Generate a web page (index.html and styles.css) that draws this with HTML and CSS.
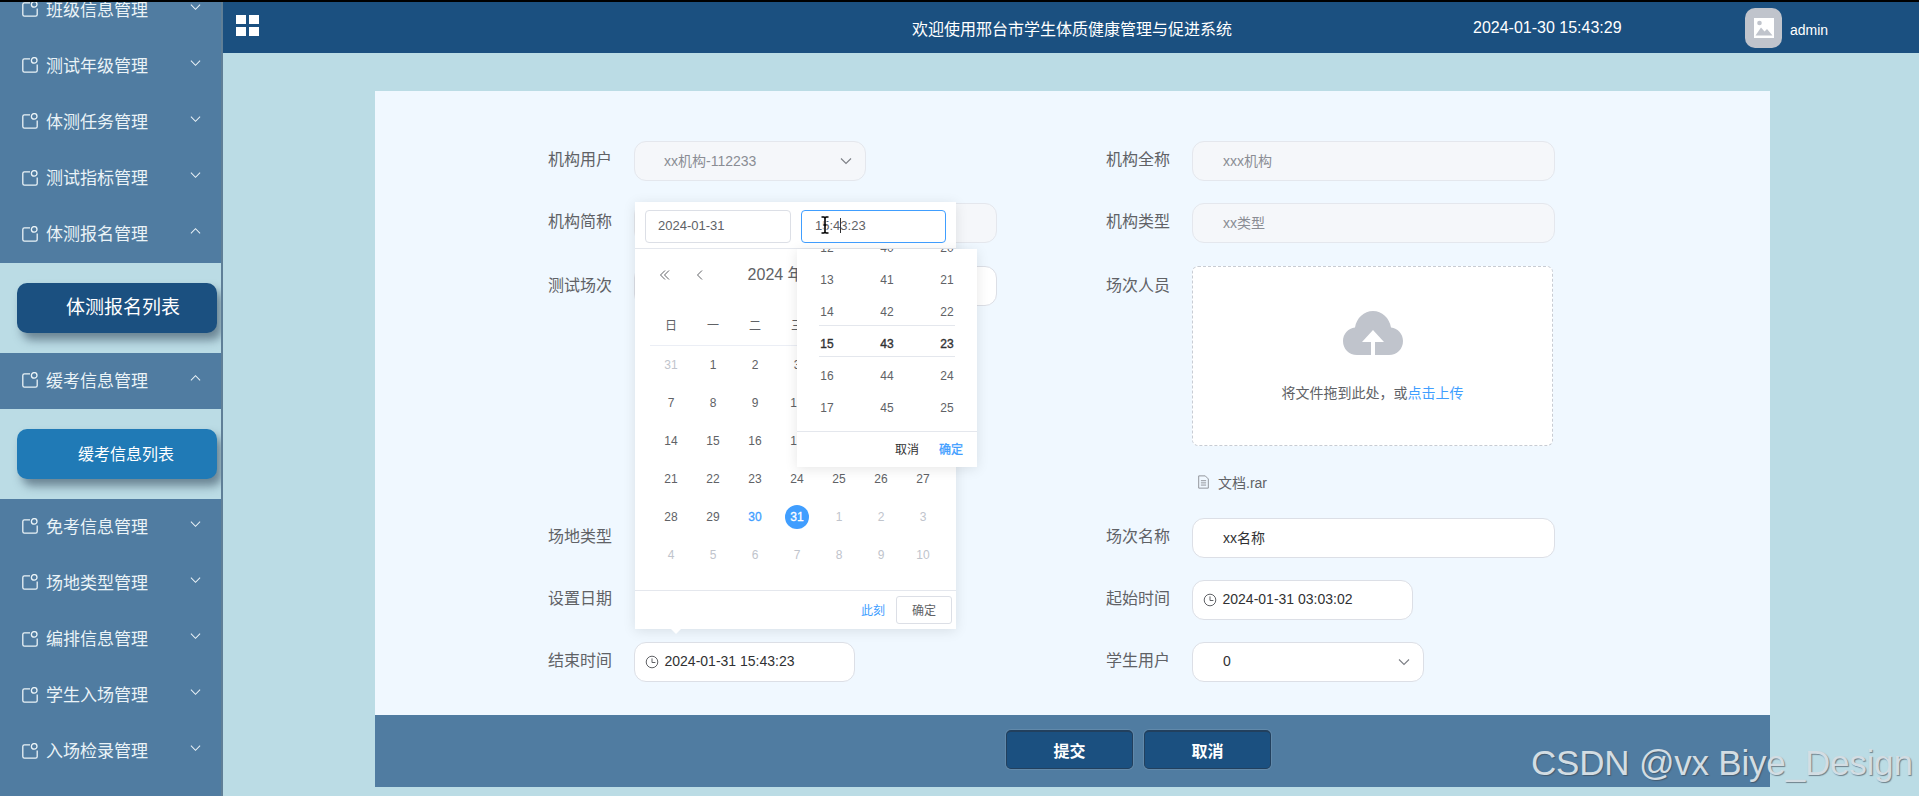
FILE: index.html
```html
<!DOCTYPE html>
<html lang="zh-CN">
<head>
<meta charset="utf-8">
<title>学生体质健康管理与促进系统</title>
<link rel="stylesheet" href="styles.css">
</head>
<body>
<svg class="defs" width="0" height="0" aria-hidden="true">
  <symbol id="tag" viewBox="0 0 16 16"><path d="M8 1.800H2.400C1.400 1.800.8 2.400.8 3.400v10.200c0 1 .6 1.600 1.600 1.600h11.200c1 0 1.600-.6 1.600-1.600V7.500" fill="none" stroke="currentColor" stroke-width="1.300"/><circle cx="12.200" cy="3.400" r="2.800" fill="none" stroke="currentColor" stroke-width="1.300"/></symbol>
  <symbol id="down" viewBox="0 0 12 8"><path d="M1 1.500l5 5 5-5" fill="none" stroke="currentColor" stroke-width="1.100"/></symbol>
  <symbol id="up" viewBox="0 0 12 8"><path d="M1 6.500l5-5 5 5" fill="none" stroke="currentColor" stroke-width="1.100"/></symbol>
  <symbol id="clock" viewBox="0 0 14 14"><circle cx="7" cy="7" r="5.800" fill="none" stroke="currentColor" stroke-width="1"/><path d="M7 3.400V7.500H10.400" fill="none" stroke="currentColor" stroke-width="1"/></symbol>
</svg>
<div class="topline"></div>
<div class="app">
  <aside class="sidebar">
    <nav class="menu">
      <div class="menu-item"><svg class="tag"><use href="#tag"/></svg><span class="menu-text">班级信息管理</span><svg class="chev"><use href="#down"/></svg></div>
      <div class="menu-item"><svg class="tag"><use href="#tag"/></svg><span class="menu-text">测试年级管理</span><svg class="chev"><use href="#down"/></svg></div>
      <div class="menu-item"><svg class="tag"><use href="#tag"/></svg><span class="menu-text">体测任务管理</span><svg class="chev"><use href="#down"/></svg></div>
      <div class="menu-item"><svg class="tag"><use href="#tag"/></svg><span class="menu-text">测试指标管理</span><svg class="chev"><use href="#down"/></svg></div>
      <div class="menu-item"><svg class="tag"><use href="#tag"/></svg><span class="menu-text">体测报名管理</span><svg class="chev"><use href="#up"/></svg></div>
      <div class="submenu"><div class="sub-btn sub-active">体测报名列表</div></div>
      <div class="menu-item"><svg class="tag"><use href="#tag"/></svg><span class="menu-text">缓考信息管理</span><svg class="chev"><use href="#up"/></svg></div>
      <div class="submenu"><div class="sub-btn sub-normal">缓考信息列表</div></div>
      <div class="menu-item"><svg class="tag"><use href="#tag"/></svg><span class="menu-text">免考信息管理</span><svg class="chev"><use href="#down"/></svg></div>
      <div class="menu-item"><svg class="tag"><use href="#tag"/></svg><span class="menu-text">场地类型管理</span><svg class="chev"><use href="#down"/></svg></div>
      <div class="menu-item"><svg class="tag"><use href="#tag"/></svg><span class="menu-text">编排信息管理</span><svg class="chev"><use href="#down"/></svg></div>
      <div class="menu-item"><svg class="tag"><use href="#tag"/></svg><span class="menu-text">学生入场管理</span><svg class="chev"><use href="#down"/></svg></div>
      <div class="menu-item"><svg class="tag"><use href="#tag"/></svg><span class="menu-text">入场检录管理</span><svg class="chev"><use href="#down"/></svg></div>
    </nav>
  </aside>
  <div class="main">
    <header class="header">
      <div class="grid-icon"><i></i><i></i><i></i><i></i></div>
      <div class="title">欢迎使用邢台市学生体质健康管理与促进系统</div>
      <div class="clock-text">2024-01-30 15:43:29</div>
      <div class="avatar"><svg viewBox="0 0 20 20" width="20" height="20"><path d="M0 0h20v20H0z" fill="#fff"/><path d="M1.500 17.500l5.500-8 3.500 4 2.500-2.500 5.500 6.500z" fill="#c0c4cc"/><circle cx="5.500" cy="5" r="2.300" fill="#c0c4cc"/></svg></div>
      <div class="user">admin</div>
    </header>
    <section class="card">
      <form class="form">
        <div class="col">
          <div class="row"><label class="label">机构用户</label><div class="input disabled w-select"><span>xx机构-112233</span><svg class="select-chev"><use href="#down"/></svg></div></div>
          <div class="row row-b"><label class="label">机构简称</label><div class="input disabled w-full"></div></div>
          <div class="row row-tall"><label class="label">测试场次</label><div class="input w-full"></div></div>
          <div class="row"><label class="label">场地类型</label></div>
          <div class="row"><label class="label">设置日期</label></div>
          <div class="row"><label class="label">结束时间</label><div class="input w-date input-date"><svg class="clock"><use href="#clock"/></svg><span>2024-01-31 15:43:23</span></div></div>
        </div>
        <div class="col">
          <div class="row"><label class="label">机构全称</label><div class="input disabled w-full"><span>xxx机构</span></div></div>
          <div class="row row-b"><label class="label">机构类型</label><div class="input disabled w-full"><span>xx类型</span></div></div>
          <div class="row row-tall"><label class="label">场次人员</label>
            <div class="upload-wrap">
              <div class="upload">
                <svg class="cloud" viewBox="0 0 60 44"><path d="M14 44C6 44 0 38 0 30 0 23 5 17.500 12 16.500 13.500 7 21 0 30 0s16.500 7 18 16.500C55 17.500 60 23 60 30c0 8-6 14-14 14H32V31h9L30 19 19 31h9v13z" fill="#c0c4cc"/></svg>
                <div class="upload-text">将文件拖到此处，或<em>点击上传</em></div>
              </div>
              <div class="file"><svg viewBox="0 0 14 16" width="13" height="14"><path d="M1.500 1h7.500l3.500 3.500V15h-11zM4 6.500h6M4 9h6M4 11.500h6" fill="none" stroke="#909399" stroke-width="1.100"/></svg><span>文档.rar</span></div>
            </div>
          </div>
          <div class="row"><label class="label">场次名称</label><div class="input w-full input-dark"><span>xx名称</span></div></div>
          <div class="row"><label class="label">起始时间</label><div class="input w-date input-date"><svg class="clock"><use href="#clock"/></svg><span>2024-01-31 03:03:02</span></div></div>
          <div class="row"><label class="label">学生用户</label><div class="input w-student input-dark"><span>0</span><svg class="select-chev"><use href="#down"/></svg></div></div>
        </div>
      </form>
      <footer class="actions">
        <button class="btn" type="button">提交</button>
        <button class="btn" type="button">取消</button>
      </footer>
    </section>
  </div>
</div>

<div class="picker">
  <div class="picker-head">
    <div class="pick-input">2024-01-31</div>
    <div class="pick-input pick-focus">15:4<i class="caret"></i>3:23</div>
  </div>
  <div class="cal">
    <div class="cal-head">
      <svg class="cal-arrow" viewBox="0 0 12 12"><path d="M6 1.500L1.500 6 6 10.500M10 1.500L5.500 6l4.500 4.500" fill="none" stroke="#606266"/></svg>
      <svg class="cal-arrow" viewBox="0 0 12 12"><path d="M8 1.500L3.500 6 8 10.500" fill="none" stroke="#606266"/></svg>
      <div class="cal-title">2024 年 1 月</div>
    </div>
    <div class="days week"><span>日</span><span>一</span><span>二</span><span>三</span><span>四</span><span>五</span><span>六</span></div>
    <div class="days">
      <span class="off">31</span><span>1</span><span>2</span><span>3</span><span>4</span><span>5</span><span>6</span>
      <span>7</span><span>8</span><span>9</span><span>10</span><span>11</span><span>12</span><span>13</span>
      <span>14</span><span>15</span><span>16</span><span>17</span><span>18</span><span>19</span><span>20</span>
      <span>21</span><span>22</span><span>23</span><span>24</span><span>25</span><span>26</span><span>27</span>
      <span>28</span><span>29</span><span class="today">30</span><span><b class="sel">31</b></span><span class="off">1</span><span class="off">2</span><span class="off">3</span>
      <span class="off">4</span><span class="off">5</span><span class="off">6</span><span class="off">7</span><span class="off">8</span><span class="off">9</span><span class="off">10</span>
    </div>
  </div>
  <div class="cal-foot"><a class="now">此刻</a><span class="ok">确定</span></div>
  <div class="arrow"></div>
</div>

<div class="time-pop">
  <div class="time-body">
    <div class="time-cols">
      <div class="time-col"><span>12</span><span>13</span><span>14</span><span class="cur">15</span><span>16</span><span>17</span></div>
      <div class="time-col"><span>40</span><span>41</span><span>42</span><span class="cur">43</span><span>44</span><span>45</span></div>
      <div class="time-col"><span>20</span><span>21</span><span>22</span><span class="cur">23</span><span>24</span><span>25</span></div>
    </div>
    <div class="time-band"></div>
  </div>
  <div class="time-foot"><span>取消</span><span class="time-ok">确定</span></div>
</div>

<svg class="cursor" viewBox="0 0 10 18" width="10" height="18"><path d="M1.500 1H4l1 1 1-1h2.500M5 2v14M1.500 17H4l1-1 1 1h2.500" fill="none" stroke="#fff" stroke-width="3"/><path d="M1.500 1H4l1 1 1-1h2.500M5 2v14M1.500 17H4l1-1 1 1h2.500M3.500 9h3" fill="none" stroke="#000" stroke-width="1.600"/></svg>
<div class="watermark">CSDN @vx Biye_Design</div>
</body>
</html>
```
FILE: styles.css
```css
* { box-sizing: border-box; }
html, body { margin: 0; height: 100%; overflow: hidden; }
body {
  background: #bbdce5;
  font-family: "Liberation Sans", "Noto Sans CJK SC", sans-serif;
  color: #606266;
}
.defs { position: absolute; }
.topline { height: 2px; background: #000; }
.app { display: flex; height: 794px; }

.sidebar { width: 223px; flex: none; overflow: hidden; background: #507ca1; border-right: 2px solid #5f7f97; }
.menu { margin-top: -20px; }
.menu-item { height: 56.200px; display: flex; align-items: center; padding: 0 0 4px 22px; color: #eaf3f7; }
.tag { width: 16px; height: 16px; flex: none; margin-top: 2px; }
.menu-text { font-size: 17px; margin-left: 8px; width: 144px; }
.chev { width: 11px; height: 8px; flex: none; margin-top: -3px; }
.submenu { height: 90px; background: #bbdce5; padding: 20px 4px 20px 17px; }
.sub-btn { height: 50px; border-radius: 10px; color: #fff; display: flex; align-items: center; box-shadow: 5px 7px 10px rgba(40, 60, 80, .55); }
.sub-active { background: #1b5080; font-size: 19px; padding: 0 0 4px 49px; }
.sub-normal { background: #207ab6; font-size: 16px; padding: 0 0 2px 61px; }

.main { flex: 1; min-width: 0; display: flex; flex-direction: column; }
.header { height: 51px; flex: none; background: #1b5080; display: flex; align-items: center; color: #fff; }
.grid-icon { width: 23px; height: 21px; margin: -4px 0 0 13px; display: grid; grid-template-columns: 10px 10px; grid-template-rows: 9px 9px; gap: 3px; }
.grid-icon i { background: #fff; }
.title { font-size: 16px; margin-left: 653px; width: 561px; }
.clock-text { font-size: 16px; width: 272px; }
.avatar { width: 37px; height: 40px; border-radius: 10px; background: #c0c4cc; display: flex; align-items: center; justify-content: center; }
.user { font-size: 14px; margin-left: 8px; margin-top: 4px; }

.card { margin: 38px 0 0 152px; width: 1395px; height: 696px; background: #f0f8ff; display: flex; flex-direction: column; }
.form { flex: 1; display: flex; padding: 50px 0 0 173px; }
.col { width: 558px; }
.row { display: flex; height: 40px; margin-bottom: 22px; }
.row-b { margin-bottom: 23px; }
.row-tall { height: 230px; }
.label { width: 86px; flex: none; font-size: 16px; line-height: 38px; color: #606266; }
.row-tall .label { line-height: 40px; }
.input { height: 40px; border: 1px solid #dcdfe6; border-radius: 12px; background: #fff; display: flex; align-items: center; font-size: 14px; padding: 0 0 2px 30px; position: relative; color: #606266; }
.disabled { background: #f5f7fa; border-color: #e4e7ed; color: #8a8d94; }
.input-dark { color: #303133; }
.w-select { width: 232px; padding-left: 29px; }
.w-full { width: 363px; }
.w-date { width: 221px; }
.w-student { width: 232px; }
.input-date { padding-left: 10px; color: #303133; }
.clock { width: 14px; height: 14px; margin: 1px 5.500px 0 0; color: #606266; flex: none; }
.select-chev { position: absolute; right: 13px; top: 15px; width: 12px; height: 8px; color: #7c7f85; }

.upload-wrap { width: 361px; }
.upload { height: 180px; background: #fff; border: 1px dashed #c8ccd3; border-radius: 6px; display: flex; flex-direction: column; align-items: center; padding-top: 44px; }
.cloud { width: 60px; height: 44px; }
.upload-text { font-size: 14px; margin-top: 27px; color: #606266; }
.upload-text em { font-style: normal; color: #409eff; }
.file { display: flex; align-items: center; gap: 8px; font-size: 14px; margin: 26px 0 0 5px; height: 20px; }

.actions { height: 72px; flex: none; background: #507ca1; display: flex; justify-content: center; gap: 11px; padding: 15px 0 0 132px; }
.btn { width: 127px; height: 39px; background: #1b5080; color: #fff; font: bold 16px "Liberation Sans", "Noto Sans CJK SC", sans-serif; border: 1px solid #22405e; border-top-width: 2px; border-radius: 5px; padding: 0; box-shadow: 0 0 0 1px rgba(255, 255, 255, .1); }

.picker { position: absolute; left: 635px; top: 202px; width: 321px; height: 427px; background: #fff; box-shadow: 0 2px 12px rgba(0, 0, 0, .1); display: flex; flex-direction: column; }
.picker-head { height: 47px; border-bottom: 1px solid #e4e7ed; display: flex; gap: 10px; padding: 8px 10px 0; flex: none; }
.pick-input { width: 146px; height: 33px; border: 1px solid #dcdfe6; border-radius: 4px; font-size: 13px; line-height: 29px; padding-left: 12px; }
.pick-focus { width: 145px; border-color: #409eff; padding-left: 13px; }
.caret { display: inline-block; width: 1px; height: 15px; margin-right: -1px; background: #303133; vertical-align: -3px; }
.cal { flex: 1; padding-left: 15px; }
.cal-head { position: relative; width: 291px; height: 56px; display: flex; align-items: center; gap: 23px; padding-left: 9px; }
.cal-arrow { width: 12px; height: 12px; margin-top: -4px; }
.cal-title { position: absolute; left: -6px; right: 0; top: 16px; text-align: center; font-size: 16px; line-height: 20px; }
.days { display: grid; grid-template-columns: repeat(7, 42px); font-size: 12px; }
.days span { height: 38px; display: flex; align-items: center; justify-content: center; }
.week { border-bottom: 1px solid #ebeef5; height: 41px; }
.week span { height: 39px; }
.off { color: #c0c4cc; }
.today { color: #409eff; -webkit-text-stroke: .3px currentColor; }
.sel { width: 24px; height: 24px; border-radius: 50%; background: #409eff; color: #fff; display: flex; align-items: center; justify-content: center; font-weight: normal; -webkit-text-stroke: .3px currentColor; }
.cal-foot { height: 39px; flex: none; border-top: 1px solid #e4e7ed; display: flex; align-items: center; justify-content: flex-end; padding-right: 4px; font-size: 12px; }
.now { color: #409eff; margin: -2px 11px 0 0; }
.ok { width: 56px; height: 28px; padding-bottom: 2px; border: 1px solid #dcdfe6; border-radius: 3px; display: flex; align-items: center; justify-content: center; }
.arrow { position: absolute; left: 35px; bottom: -5px; width: 0; height: 0; border-left: 6px solid transparent; border-right: 6px solid transparent; border-top: 6px solid #fff; }

.time-pop { position: absolute; left: 797px; top: 249px; width: 180px; height: 218px; background: #fff; box-shadow: 0 2px 12px rgba(0, 0, 0, .1); font-size: 12px; }
.time-body { height: 183px; overflow: hidden; position: relative; border-bottom: 1px solid #e4e7ed; }
.time-cols { display: flex; justify-content: space-between; padding: 0 15px; margin-top: -17px; }
.time-col { width: 30px; display: flex; flex-direction: column; align-items: center; }
.time-col span { height: 32px; line-height: 32px; }
.time-col .cur { color: #303133; -webkit-text-stroke: .35px currentColor; }
.time-band { position: absolute; left: 22px; right: 22px; top: 76px; height: 32px; border-top: 1px solid #e4e7ed; border-bottom: 1px solid #e4e7ed; }
.time-foot { height: 35px; display: flex; justify-content: flex-end; align-items: center; gap: 20px; padding: 0 14px 2px 0; color: #303133; }
.time-ok { color: #409eff; -webkit-text-stroke: .3px currentColor; }

.cursor { position: absolute; left: 820px; top: 216px; }
.watermark { position: absolute; left: 1531px; top: 741px; font-size: 35px; letter-spacing: -.2px; line-height: 44px; color: #d3dde3; text-shadow: 1px 1px 1px rgba(60, 70, 80, .6); white-space: nowrap; }
```
